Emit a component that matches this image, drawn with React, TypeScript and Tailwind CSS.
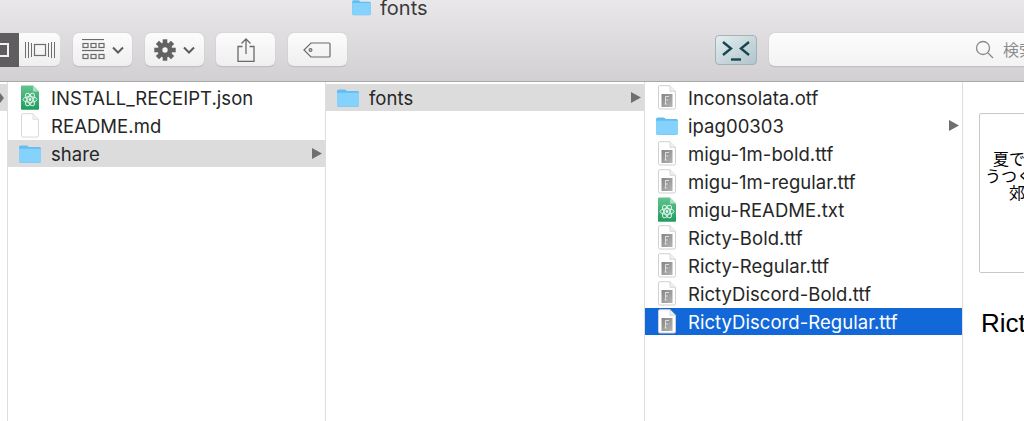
import type { ReactNode } from 'react'

type IconType = 'blank' | 'atom' | 'folder' | 'font'

type Row = {
  name: string
  icon: IconType
  arrow?: boolean
  state?: 'grey' | 'blue'
}

const firstColumn: Row[] = [
  { name: 'INSTALL_RECEIPT.json', icon: 'atom' },
  { name: 'README.md', icon: 'blank' },
  { name: 'share', icon: 'folder', arrow: true, state: 'grey' },
]

const secondColumn: Row[] = [{ name: 'fonts', icon: 'folder', arrow: true, state: 'grey' }]

const thirdColumn: Row[] = [
  { name: 'Inconsolata.otf', icon: 'font' },
  { name: 'ipag00303', icon: 'folder', arrow: true },
  { name: 'migu-1m-bold.ttf', icon: 'font' },
  { name: 'migu-1m-regular.ttf', icon: 'font' },
  { name: 'migu-README.txt', icon: 'atom' },
  { name: 'Ricty-Bold.ttf', icon: 'font' },
  { name: 'Ricty-Regular.ttf', icon: 'font' },
  { name: 'RictyDiscord-Bold.ttf', icon: 'font' },
  { name: 'RictyDiscord-Regular.ttf', icon: 'font', state: 'blue' },
]

function FolderIcon({ small }: { small?: boolean }) {
  return (
    <svg width={small ? 21 : 24} height={small ? 17 : 20} viewBox="0 0 24 20">
      <path d="M1 3.5C1 2.2 1.8 1.5 3 1.5h5.5c1 0 1.4.9 2.4 1.6h10.3c1.2 0 1.8.7 1.8 1.9V17c0 1.2-.7 2-2 2H3c-1.3 0-2-.8-2-2z" fill="#62bdf0" />
      <path d="M1 6c0-.7.5-1.2 1.2-1.2h19.6c.7 0 1.2.5 1.2 1.2v11c0 1.2-.7 1.8-2 1.8H3c-1.3 0-2-.6-2-1.8z" fill="#85d3fc" />
    </svg>
  )
}

function BlankIcon() {
  return (
    <svg width="20" height="25" viewBox="0 0 20 25">
      <path d="M1.5 2c0-.8.5-1.3 1.3-1.3H13l5.5 5.6v16.4c0 .8-.5 1.3-1.3 1.3H2.8c-.8 0-1.3-.5-1.3-1.3z" fill="#fff" stroke="#d8d8d8" />
      <path d="M13 .7v5.6h5.5" fill="#f2f2f2" stroke="#e0e0e0" />
    </svg>
  )
}

function FontIcon() {
  return (
    <svg width="20" height="25" viewBox="0 0 20 25">
      <defs>
        <linearGradient id="fontSquare" x1="0" y1="0" x2="1" y2="1">
          <stop offset="0" stopColor="#858585" />
          <stop offset="1" stopColor="#b4b4b4" />
        </linearGradient>
      </defs>
      <path d="M1.5 2c0-.8.5-1.3 1.3-1.3H13l5.5 5.6v16.4c0 .8-.5 1.3-1.3 1.3H2.8c-.8 0-1.3-.5-1.3-1.3z" fill="#fff" stroke="#d0d0d0" />
      <path d="M13 .7v5.6h5.5" fill="#efefef" stroke="#d8d8d8" />
      <rect x="4.5" y="9" width="11" height="13" fill="url(#fontSquare)" />
      <path d="M8.5 11v8M8.5 11.5h3.5M8.5 15h2.5M7.5 19h2.5" stroke="#dcdcdc" strokeWidth="1" fill="none" />
    </svg>
  )
}

function AtomIcon() {
  return (
    <svg width="20" height="25" viewBox="0 0 20 25">
      <defs>
        <linearGradient id="atomGreen" x1="0" y1="0" x2="0" y2="1">
          <stop offset="0" stopColor="#62c48e" />
          <stop offset="1" stopColor="#1f9c5f" />
        </linearGradient>
      </defs>
      <path d="M1 1.5C1 .8 1.4.4 2 .4h11l6 6v17.4c0 .6-.4 1-1 1H2c-.6 0-1-.4-1-1z" fill="url(#atomGreen)" />
      <path d="M13 .4v6h6z" fill="#a7e0c2" />
      <g fill="none" stroke="#e2f5ea" strokeWidth="1">
        <ellipse cx="10" cy="14.5" rx="7" ry="2.8" />
        <ellipse cx="10" cy="14.5" rx="7" ry="2.8" transform="rotate(60 10 14.5)" />
        <ellipse cx="10" cy="14.5" rx="7" ry="2.8" transform="rotate(120 10 14.5)" />
      </g>
      <circle cx="10" cy="14.5" r="1.4" fill="#e2f5ea" />
    </svg>
  )
}

function FileIcon({ type }: { type: IconType }) {
  if (type === 'folder') return <FolderIcon />
  if (type === 'atom') return <AtomIcon />
  if (type === 'font') return <FontIcon />
  return <BlankIcon />
}

function Arrow({ color = '#6f6f6f' }: { color?: string }) {
  return (
    <svg width="10" height="11" viewBox="0 0 10 11" className="shrink-0">
      <path d="M0 0l10 5.5L0 11z" fill={color} />
    </svg>
  )
}

function FileRow({ row }: { row: Row }) {
  const bg =
    row.state === 'blue' ? 'bg-[#1268d8]' : row.state === 'grey' ? 'bg-[#dcdcdc]' : 'bg-transparent'
  const text = row.state === 'blue' ? 'text-white' : 'text-[#262626]'
  return (
    <div className="h-[28px]">
      <div className={`flex h-[27px] items-center pl-[10px] pr-[3px] ${bg}`}>
        <div className="flex h-[27px] w-[24px] shrink-0 items-center justify-center">
          <FileIcon type={row.icon} />
        </div>
        <span className={`ml-[9px] flex-1 truncate pt-[1px] text-[18.5px] leading-[25px] tracking-[0.05px] ${text}`}>
          {row.name}
        </span>
        {row.arrow && <Arrow />}
      </div>
    </div>
  )
}

function Column({ rows, width }: { rows: Row[]; width: string }) {
  return (
    <div className={`shrink-0 border-r border-[#dedede] pt-[2px] ${width}`}>
      {rows.map((row) => (
        <FileRow key={row.name} row={row} />
      ))}
    </div>
  )
}

function ToolButton({ width, children }: { width: string; children: ReactNode }) {
  return (
    <div
      className={`flex h-[34px] items-center justify-center gap-[7px] rounded-[6px] border-b border-[#c2c0c2] bg-gradient-to-b from-[#fcfcfc] to-[#f0eff0] shadow-[0_0_1px_rgba(0,0,0,0.25)] ${width}`}
    >
      {children}
    </div>
  )
}

function Chevron() {
  return (
    <svg width="12" height="8" viewBox="0 0 12 8">
      <path d="M1 1.5l5 5 5-5" fill="none" stroke="#5c5c5c" strokeWidth="2" />
    </svg>
  )
}

function GroupIcon() {
  return (
    <svg width="23" height="21" viewBox="0 0 23 21" fill="none" stroke="#6a6a6a" strokeWidth="1.2">
      <path d="M0 .5h22" />
      <rect x="1" y="4.5" width="5" height="4" />
      <rect x="9" y="4.5" width="5" height="4" />
      <rect x="17" y="4.5" width="5" height="4" />
      <path d="M0 11.5h22" />
      <rect x="1" y="15.5" width="5" height="4" />
      <rect x="9" y="15.5" width="5" height="4" />
      <rect x="17" y="15.5" width="5" height="4" />
    </svg>
  )
}

function CoverFlowIcon() {
  return (
    <svg width="30" height="18" viewBox="0 0 30 18" fill="none" stroke="#6e6e6e">
      <path d="M.5 1v16M3.5 1v16M6.5 2v14M23.5 2v14M26.5 1v16M29.5 1v16" />
      <rect x="9.5" y="3.5" width="11" height="11" strokeWidth="1.2" />
    </svg>
  )
}

function GearIcon() {
  const teeth = [0, 45, 90, 135, 180, 225, 270, 315]
  return (
    <svg width="22" height="22" viewBox="0 0 22 22">
      {teeth.map((deg) => (
        <rect key={deg} x="8.7" y="0.3" width="4.6" height="6" fill="#626262" transform={`rotate(${deg} 11 11)`} />
      ))}
      <circle cx="11" cy="11" r="7.4" fill="#626262" />
      <circle cx="11" cy="11" r="2.7" fill="#f6f6f6" />
    </svg>
  )
}

function ShareIcon() {
  return (
    <svg width="18" height="24" viewBox="0 0 18 24" fill="none" stroke="#6a6a6a" strokeWidth="1.3">
      <path d="M5.5 8.5H1v15h16v-15h-4.5" />
      <path d="M9 16V1M4.5 5.5L9 1l4.5 4.5" />
    </svg>
  )
}

function TagIcon() {
  return (
    <svg width="28" height="16" viewBox="0 0 28 16" fill="none" stroke="#6a6a6a" strokeWidth="1.2">
      <path d="M8 1h18c.7 0 1 .4 1 1v12c0 .7-.3 1-1 1H8L1 8z" />
      <circle cx="7.5" cy="8" r="1.4" />
    </svg>
  )
}

function TerminalButton() {
  return (
    <div className="flex h-[30px] w-[42px] shrink-0 items-center justify-center rounded-[4px] border border-[#a3b2b6] bg-gradient-to-br from-[#e4eef0] via-[#c9d9dd] to-[#b0c5cb]">
      <svg width="28" height="21" viewBox="0 0 28 21" fill="none" stroke="#17474f" strokeWidth="2.4">
        <path d="M1 2l8 6.5-8 6.5M27 2l-8 6.5 8 6.5" />
        <path d="M9 19.5h10" />
      </svg>
    </div>
  )
}

function SearchBox() {
  return (
    <div className="ml-[12px] -mr-[40px] flex h-[34px] w-[295px] shrink-0 items-center rounded-[6px] border-b border-[#c2c0c2] bg-gradient-to-b from-[#fcfcfc] to-[#f4f3f4] pl-[206px] shadow-[0_0_1px_rgba(0,0,0,0.25)]">
      <svg width="19" height="19" viewBox="0 0 19 19" fill="none" stroke="#8a8a8a" strokeWidth="1.3">
        <circle cx="8" cy="8" r="6.5" />
        <path d="M13 13l5 5" />
      </svg>
      <span className="ml-[9px] whitespace-nowrap text-[16px] text-[#8c8c8c]">検索</span>
    </div>
  )
}

function Toolbar() {
  return (
    <div className="h-[82px] shrink-0 overflow-hidden border-b border-[#a9a7a9] bg-gradient-to-b from-[#e9e7e9] to-[#d2d0d2]">
      <div className="flex h-[16px] items-end pl-[351px]">
        <FolderIcon small />
        <span className="ml-[8px] text-[20px] leading-[16px] text-[#3a3a3a]">fonts</span>
      </div>
      <div className="mt-[17px] flex items-center">
        <div className="flex h-[34px] w-[19px] items-center justify-start overflow-hidden bg-[#5f5d5f]">
          <div className="h-[14px] w-[9px] border-2 border-l-0 border-[#f2f2f2] bg-[#5f5d5f]" />
        </div>
        <div className="flex h-[34px] w-[41px] items-center justify-center rounded-r-[6px] border-b border-[#c2c0c2] bg-gradient-to-b from-[#fcfcfc] to-[#f0eff0]">
          <CoverFlowIcon />
        </div>
        <div className="ml-[13px] flex gap-[12.5px]">
          <ToolButton width="w-[59px]">
            <GroupIcon />
            <Chevron />
          </ToolButton>
          <ToolButton width="w-[59px]">
            <GearIcon />
            <Chevron />
          </ToolButton>
          <ToolButton width="w-[59px]">
            <ShareIcon />
          </ToolButton>
          <ToolButton width="w-[59px]">
            <TagIcon />
          </ToolButton>
        </div>
        <div className="flex-1" />
        <TerminalButton />
        <SearchBox />
      </div>
    </div>
  )
}

function Preview() {
  return (
    <div className="min-w-0 flex-1 overflow-hidden pl-[16px] pt-[31px]">
      <div className="h-[160px] w-[120px] rounded-[2px] border border-[#c8c8c8] pt-[37px] text-[16px] leading-[17px] whitespace-nowrap text-black">
        <div className="pl-[13px]">夏で</div>
        <div className="pl-[5px]">うつく</div>
        <div className="pl-[29px]">郊</div>
      </div>
      <div className="ml-[2px] mt-[34px] w-[300px] font-['Liberation_Sans',sans-serif] text-[26px] leading-[32px] whitespace-nowrap text-black">
        RictyDiscord-Regular.ttf
      </div>
    </div>
  )
}

export default function App() {
  return (
    <div className="flex h-[421px] w-[1024px] flex-col overflow-hidden bg-white font-['Inter','Noto_Sans_CJK_JP',sans-serif]">
      <Toolbar />
      <div className="flex min-h-0 flex-1">
        <div className="w-[8px] shrink-0 border-r border-[#dedede] pt-[2px]">
          <div className="flex h-[27px] items-center bg-[#dcdcdc]">
            <svg width="4" height="10" viewBox="0 0 4 10">
              <path d="M0 0l4 5-4 5z" fill="#6f6f6f" />
            </svg>
          </div>
        </div>
        <Column rows={firstColumn} width="w-[318px]" />
        <Column rows={secondColumn} width="w-[319px]" />
        <Column rows={thirdColumn} width="w-[318px]" />
        <Preview />
      </div>
    </div>
  )
}
